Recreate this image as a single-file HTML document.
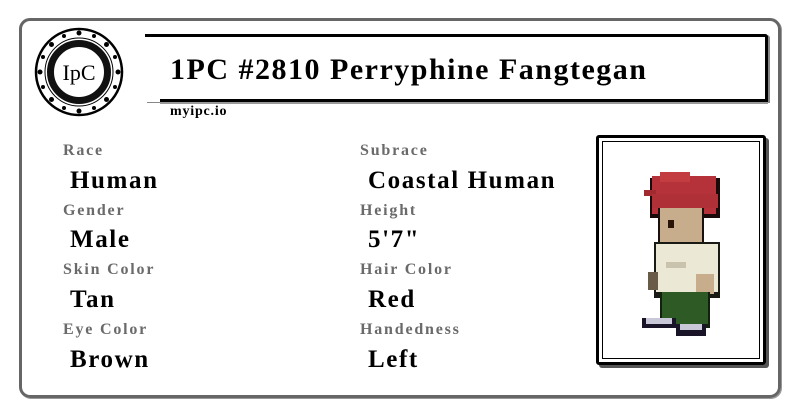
<!DOCTYPE html>
<html><head><meta charset="utf-8"><style>
html,body{margin:0;padding:0;background:#fff;width:800px;height:418px;overflow:hidden;position:relative;font-family:"Liberation Serif",serif}
.card{position:absolute;left:19px;top:18px;width:756px;height:374px;border:3px solid #666;border-radius:11px;box-shadow:1px 1px 0 #999}
.t{position:absolute;white-space:nowrap}
.lab{color:#6a6a6a;font-size:16px;font-weight:bold;letter-spacing:1.8px}
.val{color:#000;font-size:25px;font-weight:bold;letter-spacing:1.6px}
.tb{position:absolute;left:145px;top:34px;width:620px;height:65px;border-top:3px solid #000;border-right:3px solid #000;border-radius:0 3px 0 0;box-shadow:2px 1px 0 #888}
.tbb{position:absolute;left:160px;top:99px;width:608px;height:3px;background:#000;box-shadow:0 2px 0 #999}
.frame{position:absolute;left:596px;top:135px;width:164px;height:224px;border:3px solid #000;border-radius:3px;box-shadow:3px 3px 0 #555}
.inner{position:absolute;left:3px;top:3px;right:3px;bottom:3px;border:1px solid #000}
</style></head><body>
<div class="card"></div>
<svg class="t" style="left:33px;top:26px" width="92" height="92" viewBox="0 0 92 92">
<circle cx="46" cy="46" r="43" fill="#fff" stroke="#000" stroke-width="2.5"/>
<circle cx="46" cy="46" r="28.5" fill="none" stroke="#111" stroke-width="7"/>
<circle cx="46" cy="46" r="34" fill="none" stroke="#000" stroke-width="1"/>
<circle cx="46" cy="46" r="24" fill="#fff"/>
<g fill="#000">
<circle cx="46" cy="7" r="2.5"/><circle cx="46" cy="85" r="2.5"/><circle cx="7" cy="46" r="2.5"/><circle cx="85" cy="46" r="2.5"/>
<circle cx="18.5" cy="18.5" r="2.5"/><circle cx="73.5" cy="18.5" r="2.5"/><circle cx="18.5" cy="73.5" r="2.5"/><circle cx="73.5" cy="73.5" r="2.5"/>
<circle cx="31" cy="10" r="2"/><circle cx="61" cy="10" r="2"/><circle cx="31" cy="82" r="2"/><circle cx="61" cy="82" r="2"/>
<circle cx="10" cy="31" r="2"/><circle cx="10" cy="61" r="2"/><circle cx="82" cy="31" r="2"/><circle cx="82" cy="61" r="2"/>
</g>
<text x="46" y="54" text-anchor="middle" font-family="Liberation Serif,serif" font-size="22" fill="#000">IpC</text>
</svg>
<div class="tb"></div><div class="tbb"></div>
<div class="t" style="left:170px;top:53px;font-size:30px;font-weight:bold;letter-spacing:1.5px">1PC #2810 Perryphine Fangtegan</div>
<div class="t" style="left:170px;top:104px;font-size:14px;font-weight:bold;letter-spacing:0.8px">myipc.io</div>

<div class="t lab" style="left:63px;top:142px">Race</div>
<div class="t val" style="left:70px;top:167px">Human</div>
<div class="t lab" style="left:63px;top:202px">Gender</div>
<div class="t val" style="left:70px;top:226px">Male</div>
<div class="t lab" style="left:63px;top:261px">Skin Color</div>
<div class="t val" style="left:70px;top:286px">Tan</div>
<div class="t lab" style="left:63px;top:321px">Eye Color</div>
<div class="t val" style="left:70px;top:346px">Brown</div>

<div class="t lab" style="left:360px;top:142px">Subrace</div>
<div class="t val" style="left:368px;top:167px">Coastal Human</div>
<div class="t lab" style="left:360px;top:202px">Height</div>
<div class="t val" style="left:368px;top:226px">5'7"</div>
<div class="t lab" style="left:360px;top:261px">Hair Color</div>
<div class="t val" style="left:368px;top:286px">Red</div>
<div class="t lab" style="left:360px;top:321px">Handedness</div>
<div class="t val" style="left:368px;top:346px">Left</div>

<div class="frame"><div class="inner"></div></div>
<svg class="t" style="left:640px;top:168px" width="84" height="180" viewBox="0 0 84 180" shape-rendering="crispEdges">
<rect x="10" y="10" width="70" height="40" fill="#1a0a0a"/>
<rect x="12" y="8" width="64" height="38" fill="#b5323a"/>
<rect x="20" y="4" width="30" height="10" fill="#c23c40"/>
<rect x="4" y="22" width="12" height="6" fill="#a02a30"/>
<rect x="18" y="36" width="46" height="40" fill="#1a1010"/>
<rect x="20" y="38" width="42" height="36" fill="#c8ad8c"/>
<rect x="12" y="26" width="66" height="14" fill="#b03038"/>
<rect x="28" y="52" width="6" height="8" fill="#2a1408"/>
<rect x="14" y="74" width="66" height="56" fill="#1a1a14"/>
<rect x="16" y="76" width="62" height="48" fill="#ece8d6"/>
<rect x="26" y="94" width="20" height="6" fill="#c9c3ad"/>
<rect x="8" y="104" width="10" height="18" fill="#6a5a48"/>
<rect x="56" y="106" width="18" height="20" fill="#c8ad8c"/>
<rect x="20" y="124" width="50" height="36" fill="#14200f"/>
<rect x="22" y="124" width="46" height="32" fill="#2e5a26"/>
<rect x="2" y="150" width="34" height="10" fill="#1a1428"/>
<rect x="6" y="150" width="26" height="6" fill="#c8c8d8"/>
<rect x="36" y="156" width="30" height="12" fill="#1a1428"/>
<rect x="40" y="156" width="22" height="6" fill="#c8c8d8"/>
</svg>
</body></html>
